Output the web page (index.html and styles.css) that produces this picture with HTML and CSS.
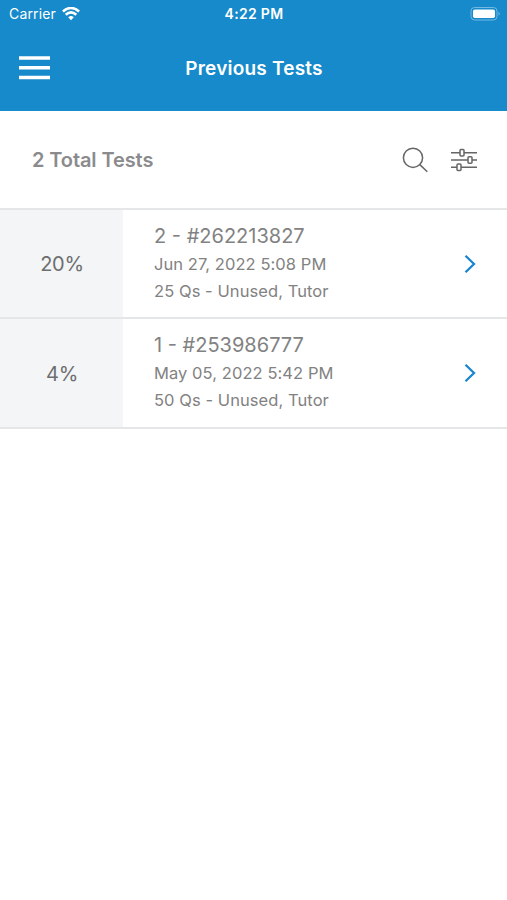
FILE: index.html
```html
<!DOCTYPE html>
<html lang="en">
<head>
<meta charset="utf-8">
<title>Previous Tests</title>
<link rel="stylesheet" href="styles.css">
</head>
<body>
<header class="top">
  <div class="status">
    <div class="carrier"><span class="carrier-name">Carrier</span>
      <svg width="18" height="14" viewBox="0 0 18 14" fill="none" stroke="#fff" stroke-width="2.600"><path d="M.9 4.500Q9-2.500 17.100 4.500M3.700 7.800Q9 3.100 14.300 7.800"/><path d="M6.200 10.300Q9 7.800 11.800 10.300L9 13.300Z" fill="#fff" stroke="none"/></svg>
    </div>
    <div class="time">4:22 PM</div>
    <svg class="battery" width="31" height="14" viewBox="0 0 31 14"><rect x="1" y=".5" width="26" height="12.500" rx="3.500" fill="none" stroke="#73b9e2"/><rect x="3" y="2.500" width="22" height="8.500" rx="1.800" fill="#fff"/><path d="M28.500 4.700Q31 6.700 28.500 8.700Z" fill="#73b9e2"/></svg>
  </div>
  <nav class="nav">
    <svg width="32" height="26" viewBox="0 0 32 26" stroke="#fff" stroke-width="3.400"><path d="M1 3H32M1 12.800H32M1 22.500H32"/></svg>
    <h1 class="title">Previous Tests</h1>
  </nav>
</header>
<section class="summary">
  <h2 class="total">2 Total Tests</h2>
  <div class="tools">
    <svg width="28" height="28" viewBox="0 0 28 28" fill="none" stroke="#666" stroke-width="1.500"><circle cx="12" cy="11.800" r="9.600"/><path d="M18.800 18.600L26.300 25.800"/></svg>
    <svg width="28" height="28" viewBox="0 0 28 28" fill="none" stroke="#666" stroke-width="1.500"><path d="M1 6.700H10M14 6.700H27M1 14H18M22 14H27M1 21.300H7M11 21.300H27"/><rect x="10" y="3.400" width="4" height="6.600" rx="1"/><rect x="18" y="10.700" width="4" height="6.600" rx="1"/><rect x="7" y="18" width="4" height="6.600" rx="1"/></svg>
  </div>
</section>
<main class="list">
  <article class="row">
    <div class="score">20%</div>
    <div class="info"><div class="name">2 - #262213827</div><div class="date">Jun 27, 2022 5:08 PM</div><div class="mode">25 Qs - Unused, Tutor</div></div>
    <svg class="chevron" width="12" height="20" viewBox="0 0 12 20"><path d="M1.500 1.700L10 10L1.500 18.300"/></svg>
  </article>
  <article class="row">
    <div class="score">4%</div>
    <div class="info"><div class="name">1 - #253986777</div><div class="date">May 05, 2022 5:42 PM</div><div class="mode">50 Qs - Unused, Tutor</div></div>
    <svg class="chevron" width="12" height="20" viewBox="0 0 12 20"><path d="M1.500 1.700L10 10L1.500 18.300"/></svg>
  </article>
</main>
</body>
</html>
```
FILE: styles.css
```css
* { box-sizing: border-box; }
body { margin: 0; background: #fff; font-family: Inter, sans-serif; color: #828282; }
svg { display: block; flex: none; }
.top { height: 111px; background: #168aca; color: #fff; }
.status { height: 27px; display: grid; grid-template-columns: 1fr auto 1fr; align-items: center; padding: 0 6px 0 9px; font-size: 14px; }
.carrier { display: flex; align-items: center; gap: 6px; }
.carrier-name { letter-spacing: .15px; }
.time { font-weight: 600; letter-spacing: .3px; margin-left: -2px; }
.battery { justify-self: end; }
.nav { height: 82px; display: grid; grid-template-columns: 32px 1fr 32px; align-items: center; padding: 0 18px; }
.title { margin: 0; padding-left: 1px; text-align: center; font-size: 19px; font-weight: 600; letter-spacing: .2px; }
.summary { height: 97px; padding: 1px 29px 0 32px; display: flex; align-items: center; justify-content: space-between; }
.total { margin: 0; font-size: 20px; font-weight: 600; letter-spacing: -.1px; color: #8b8b8d; }
.tools { display: flex; gap: 21px; }
.row { height: 109px; display: flex; align-items: center; border-top: 2px solid #e5e6e7; padding-right: 31px; }
.row:last-child { height: 112px; border-bottom: 2px solid #e5e6e7; }
.score { width: 123px; align-self: stretch; background: #f3f5f7; display: grid; place-items: center; font-size: 20px; letter-spacing: -.3px; padding: 1px 0 0 1px; color: #6e6e6e; }
.info { flex: 1; padding-left: 31px; font-size: 16.500px; letter-spacing: .07px; line-height: 27px; }
.name { font-size: 20px; line-height: 29px; letter-spacing: 0; margin-top: -1px; }
.chevron { fill: none; stroke: #1b86d0; stroke-width: 2.3; }
```
